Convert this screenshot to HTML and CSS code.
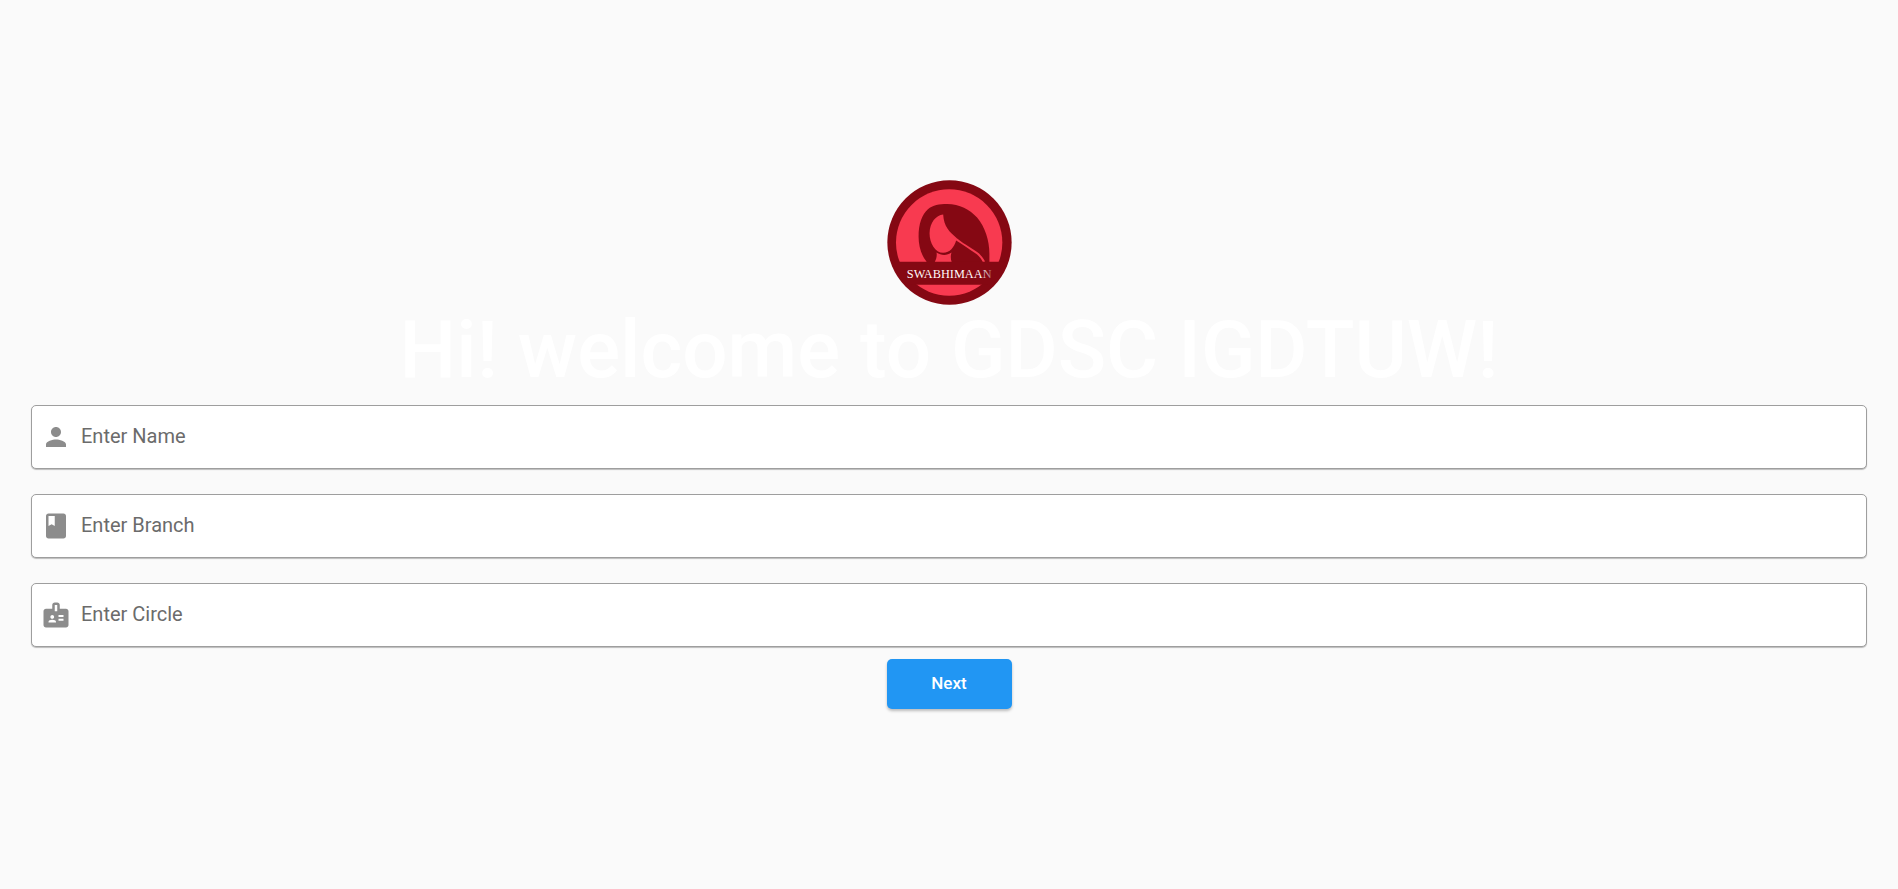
FILE: index.html
```html
<!DOCTYPE html>
<html lang="en">
<head>
<meta charset="utf-8">
<meta name="viewport" content="width=device-width, initial-scale=1">
<title>Swabhimaan</title>
<link rel="stylesheet" href="styles.css">
</head>
<body>
<main class="page">
  <svg class="logo" viewBox="19 18 376 376" role="img" aria-label="Swabhimaan">
    <defs>
      <linearGradient id="fade" gradientUnits="userSpaceOnUse" x1="80" y1="0" x2="334" y2="0">
        <stop offset="0.86" stop-color="#fff"/>
        <stop offset="1" stop-color="#a8626c"/>
      </linearGradient>
    </defs>
    <circle cx="207" cy="206" r="187" fill="#850813"/>
    <circle cx="206" cy="206" r="160" fill="#f83a50"/>
    <path fill="#850813" d="M138 264C122 244 114 218 114 188C114 150 124 122 142 106C157 93 176 90 200 90C237 91 268 106 290 131C314 160 327 200 327 240V270H138Z"/>
    <path fill="#f83a50" d="M188 122C166 124 148 146 147 178C147 208 164 237 188 237C208 237 221 220 227 200C247 213 270 228 287 240C296 247 303 255 308 266L314 263C305 248 298 240 289 234C268 219 244 206 229 193C207 175 190 158 188 122Z"/>
    <path fill="#f83a50" d="M168 236C182 246 200 246 213 236C210 246 210 256 214 266H162C167 256 170 247 168 236Z"/>
    <path fill="#850813" d="M40 264H374L350 300L320 333H92L62 300Z"/>
    <text class="logo-name" x="206" y="312" text-anchor="middle" fill="url(#fade)">SWABHIMAAN</text>
  </svg>
  <h1 class="title">Hi! welcome to GDSC IGDTUW!</h1>
  <form class="form">
    <label class="field">
      <svg class="icon" viewBox="0 0 24 24" aria-hidden="true"><path d="M12 12c2.210 0 4-1.790 4-4s-1.790-4-4-4-4 1.790-4 4 1.790 4 4 4zm0 2c-2.670 0-8 1.340-8 4v2h16v-2c0-2.660-5.330-4-8-4z"/></svg>
      <input class="input" type="text" placeholder="Enter Name" aria-label="Enter Name">
    </label>
    <label class="field">
      <svg class="icon" viewBox="0 0 24 24" aria-hidden="true"><path d="M18 2H6c-1.100 0-2 .9-2 2v16c0 1.100.9 2 2 2h12c1.100 0 2-.9 2-2V4c0-1.100-.9-2-2-2zM6 4h5v8l-2.500-1.500L6 12V4z"/></svg>
      <input class="input" type="text" placeholder="Enter Branch" aria-label="Enter Branch">
    </label>
    <label class="field">
      <svg class="icon" viewBox="0 0 24 24" aria-hidden="true"><path fill-rule="evenodd" d="M20 7h-5V4c0-1.100-.9-2-2-2h-2c-1.100 0-2 .9-2 2v3H4c-1.100 0-2 .9-2 2v11c0 1.100.9 2 2 2h16c1.100 0 2-.9 2-2V9c0-1.100-.9-2-2-2zM9 12c.83 0 1.500.67 1.500 1.500S9.830 15 9 15s-1.500-.67-1.500-1.500S8.170 12 9 12zM12 18H6v-.430c0-.6.36-1.150.92-1.390C7.560 15.900 8.260 15.750 9 15.750s1.440.15 2.080.43c.55.24.92.78.92 1.390V18zM11 4h2v5h-2V4zM18 16.500h-4V15h4v1.500zM18 13.500h-4V12h4v1.500z"/></svg>
      <input class="input" type="text" placeholder="Enter Circle" aria-label="Enter Circle">
    </label>
    <button class="next" type="button">Next</button>
  </form>
</main>
</body>
</html>
```
FILE: styles.css
```css
* {
  box-sizing: border-box;
}

body {
  margin: 0;
  background: #fafafa;
  font-family: Roboto, "Liberation Sans", sans-serif;
}

.page {
  display: flex;
  flex-direction: column;
  align-items: center;
  justify-content: center;
  min-height: 100vh;
  padding: 0 31px;
}

.logo {
  width: 125px;
  height: 125px;
}

.logo-name {
  font-family: "Liberation Serif", serif;
  font-size: 37px;
}

.title {
  margin: 0 0 9px;
  color: #fff;
  font-size: 80px;
  font-weight: 500;
  line-height: 91px;
  text-align: center;
}

.form {
  display: flex;
  flex-direction: column;
  align-items: center;
  width: 100%;
}

.field {
  display: flex;
  align-items: center;
  width: 100%;
  height: 64px;
  margin-bottom: 25px;
  padding: 0 9px;
  gap: 10px;
  border: 1px solid #9e9e9e;
  border-radius: 5px;
  background: #fff;
  box-shadow: 0 1px 1px rgba(0, 0, 0, 0.25);
}

.field:last-of-type {
  margin-bottom: 12px;
}

.icon {
  flex: none;
  width: 30px;
  height: 30px;
  fill: #8c8c8c;
}

.input {
  flex: 1;
  min-width: 0;
  height: 100%;
  padding: 0 0 3px;
  border: 0;
  outline: 0;
  background: transparent;
  color: #212121;
  font: inherit;
  font-size: 20px;
}

.input::placeholder {
  color: #6b6b6b;
  opacity: 1;
}

.next {
  width: 125px;
  height: 50px;
  padding: 0 0 2px;
  border: 0;
  border-radius: 5px;
  background: #2196f3;
  box-shadow: 0 2px 3px rgba(0, 0, 0, 0.25);
  color: #fff;
  font: inherit;
  font-size: 17px;
  font-weight: 500;
}
```
